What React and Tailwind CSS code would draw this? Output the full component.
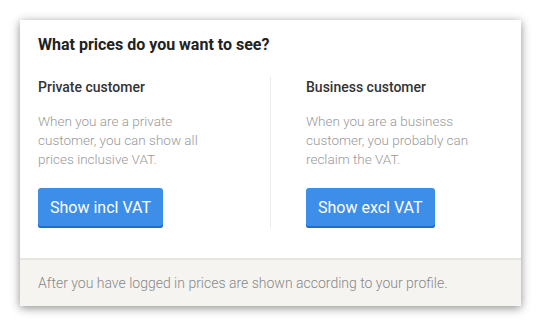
import React from 'react';

const Option = ({ title, text, label, divider }) => (
  <div className={`flex flex-col ${divider ? 'border-r border-[#ececec]' : 'pl-[35px]'}`}>
    <h3 className="text-[14px] leading-[20px] font-medium text-[#333]">{title}</h3>
    <p className="mt-[15px] text-[13.5px] leading-[19px] font-light text-[#999] w-[180px]">{text}</p>
    <div className="mt-[19px]">
      <button className="h-[40px] px-[12px] rounded-[3px] bg-[#3d8ee9] text-white text-[16px] font-normal shadow-[inset_0_-2px_0_#1c6fc9]">
        {label}
      </button>
    </div>
  </div>
);

export default function App() {
  return (
    <div className="min-h-screen bg-white p-5" style={{ fontFamily: 'Roboto, "Liberation Sans", sans-serif' }}>
      <div className="w-[501px] h-[286px] bg-white flex flex-col shadow-[0_2px_9px_rgba(0,0,0,0.45)]">
        <div className="flex-1 px-[18px] pt-[13px]">
          <h2 className="text-[16px] leading-[24px] font-bold text-[#222]">What prices do you want to see?</h2>
          <div className="mt-[20px] grid grid-cols-[233px_1fr]">
            <Option
              divider
              title="Private customer"
              text="When you are a private customer, you can show all prices inclusive VAT."
              label="Show incl VAT"
            />
            <Option
              title="Business customer"
              text="When you are a business customer, you probably can reclaim the VAT."
              label="Show excl VAT"
            />
          </div>
        </div>
        <div className="h-[48px] border-t-2 border-[#e8e6e1] bg-[#f5f4f1] px-[18px] flex items-center">
          <p className="text-[14px] font-light text-[#888]">
            After you have logged in prices are shown according to your profile.
          </p>
        </div>
      </div>
    </div>
  );
}
